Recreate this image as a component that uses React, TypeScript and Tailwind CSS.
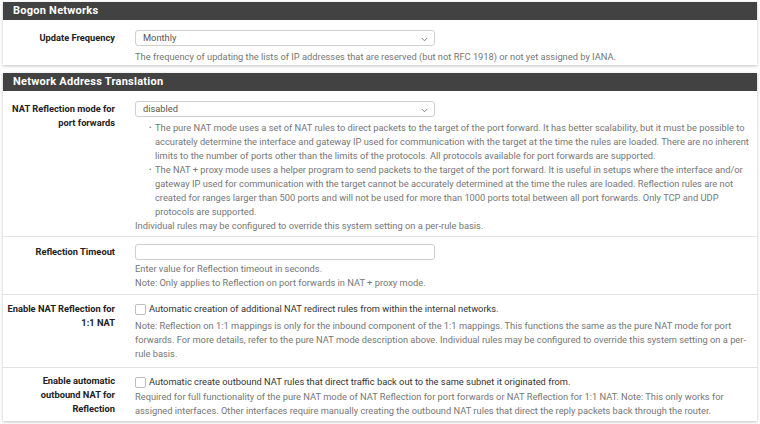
import { ReactNode } from "react"

function Chevron() {
  return (
    <svg width="7" height="5" viewBox="0 0 7 5" className="absolute right-[6px] top-[6px]">
      <path d="M0.8 1 L3.5 3.8 L6.2 1" fill="none" stroke="#777" strokeWidth="0.9" />
    </svg>
  )
}

function Select({ value }: { value: string }) {
  return (
    <div className="relative w-[300px] h-[16px] border border-[#cfcfcf] rounded-[3px] bg-white pl-[7px] text-[9.3px] leading-[14px] text-[#555]">
      {value}
      <Chevron />
    </div>
  )
}

function Checkbox({ text }: { text: string }) {
  return (
    <div className="flex items-center gap-[3px] h-[14px] text-[9.3px] text-[#333]">
      <span className="w-[11px] h-[11px] border border-[#bdbdbd] rounded-[2px] bg-white shrink-0" />
      <span>{text}</span>
    </div>
  )
}

function Help({ children, className = "" }: { children: ReactNode; className?: string }) {
  return <div className={"text-[9.3px] leading-[14px] text-[#767676] " + className}>{children}</div>
}

function Bullet({ children }: { children: ReactNode }) {
  return (
    <li className="flex">
      <span className="w-[20px] shrink-0 pl-[14px] text-[7px]">•</span>
      <span>{children}</span>
    </li>
  )
}

function Row({
  label,
  children,
  pt,
  lpt,
  pb,
  border = true,
}: {
  label: ReactNode
  children: ReactNode
  pt: string
  lpt: string
  pb: string
  border?: boolean
}) {
  return (
    <div className={"grid grid-cols-[132px_1fr] " + (border ? "border-t border-[#e3e3e3] " : "") + pb}>
      <div className={"text-right pr-[20px] text-[9.3px] leading-[14px] font-bold text-[#222] " + lpt}>{label}</div>
      <div className={"pr-[2px] " + pt}>{children}</div>
    </div>
  )
}

function Panel({ title, children }: { title: string; children: ReactNode }) {
  return (
    <div className="bg-white shadow-[0_1px_3px_rgba(0,0,0,0.25)] mb-[8px]">
      <div className="h-[18px] bg-[#424242] px-[10px] text-[11px] leading-[18px] font-bold tracking-[0.25px] text-white">
        {title}
      </div>
      {children}
    </div>
  )
}

export default function App() {
  return (
    <div className="min-h-screen bg-white px-[3px] pt-[2px] font-[Roboto,sans-serif]">
      <Panel title="Bogon Networks">
        <Row label="Update Frequency" pt="pt-[10px]" lpt="pt-[11px]" pb="pb-[1px]" border={false}>
          <Select value="Monthly" />
          <Help className="mt-[4px]">
            The frequency of updating the lists of IP addresses that are reserved (but not RFC 1918) or not yet
            assigned by IANA.
          </Help>
        </Row>
      </Panel>

      <Panel title="Network Address Translation">
        <Row
          label={
            <>
              NAT Reflection mode for
              <br />
              port forwards
            </>
          }
          pt="pt-[10px]"
          lpt="pt-[11px]"
          pb="pb-[3px]"
          border={false}
        >
          <Select value="disabled" />
          <Help className="mt-[4px]">
            <ul>
              <Bullet>
                The pure NAT mode uses a set of NAT rules to direct packets to the target of the port forward. It
                has better scalability, but it must be possible to accurately determine the interface and gateway IP
                used for communication with the target at the time the rules are loaded. There are no inherent limits
                to the number of ports other than the limits of the protocols. All protocols available for port
                forwards are supported.
              </Bullet>
              <Bullet>
                The NAT + proxy mode uses a helper program to send packets to the target of the port forward. It is
                useful in setups where the interface and/or gateway IP used for communication with the target cannot
                be accurately determined at the time the rules are loaded. Reflection rules are not created for
                ranges larger than 500 ports and will not be used for more than 1000 ports total between all port
                forwards. Only TCP and UDP protocols are supported.
              </Bullet>
            </ul>
            <div>Individual rules may be configured to override this system setting on a per-rule basis.</div>
          </Help>
        </Row>

        <Row label="Reflection Timeout" pt="pt-[7px]" lpt="pt-[8px]" pb="pb-[4px]">
          <div className="w-[300px] h-[16px] border border-[#cfcfcf] rounded-[3px] bg-white" />
          <Help className="mt-[2px]">
            Enter value for Reflection timeout in seconds.
            <br />
            Note: Only applies to Reflection on port forwards in NAT + proxy mode.
          </Help>
        </Row>

        <Row
          label={
            <>
              Enable NAT Reflection for
              <br />
              1:1 NAT
            </>
          }
          pt="pt-[7px]"
          lpt="pt-[7px]"
          pb="pb-[6px]"
        >
          <Checkbox text="Automatic creation of additional NAT redirect rules from within the internal networks." />
          <Help className="mt-[3px]">
            Note: Reflection on 1:1 mappings is only for the inbound component of the 1:1 mappings. This functions the
            same as the pure NAT mode for port forwards. For more details, refer to the pure NAT mode description
            above. Individual rules may be configured to override this system setting on a per-rule basis.
          </Help>
        </Row>

        <Row
          label={
            <>
              Enable automatic
              <br />
              outbound NAT for
              <br />
              Reflection
            </>
          }
          pt="pt-[7px]"
          lpt="pt-[6px]"
          pb="pb-[3px]"
        >
          <Checkbox text="Automatic create outbound NAT rules that direct traffic back out to the same subnet it originated from." />
          <Help className="mt-[1px]">
            Required for full functionality of the pure NAT mode of NAT Reflection for port forwards or NAT Reflection
            for 1:1 NAT. Note: This only works for assigned interfaces. Other interfaces require manually creating the
            outbound NAT rules that direct the reply packets back through the router.
          </Help>
        </Row>
      </Panel>
    </div>
  )
}
